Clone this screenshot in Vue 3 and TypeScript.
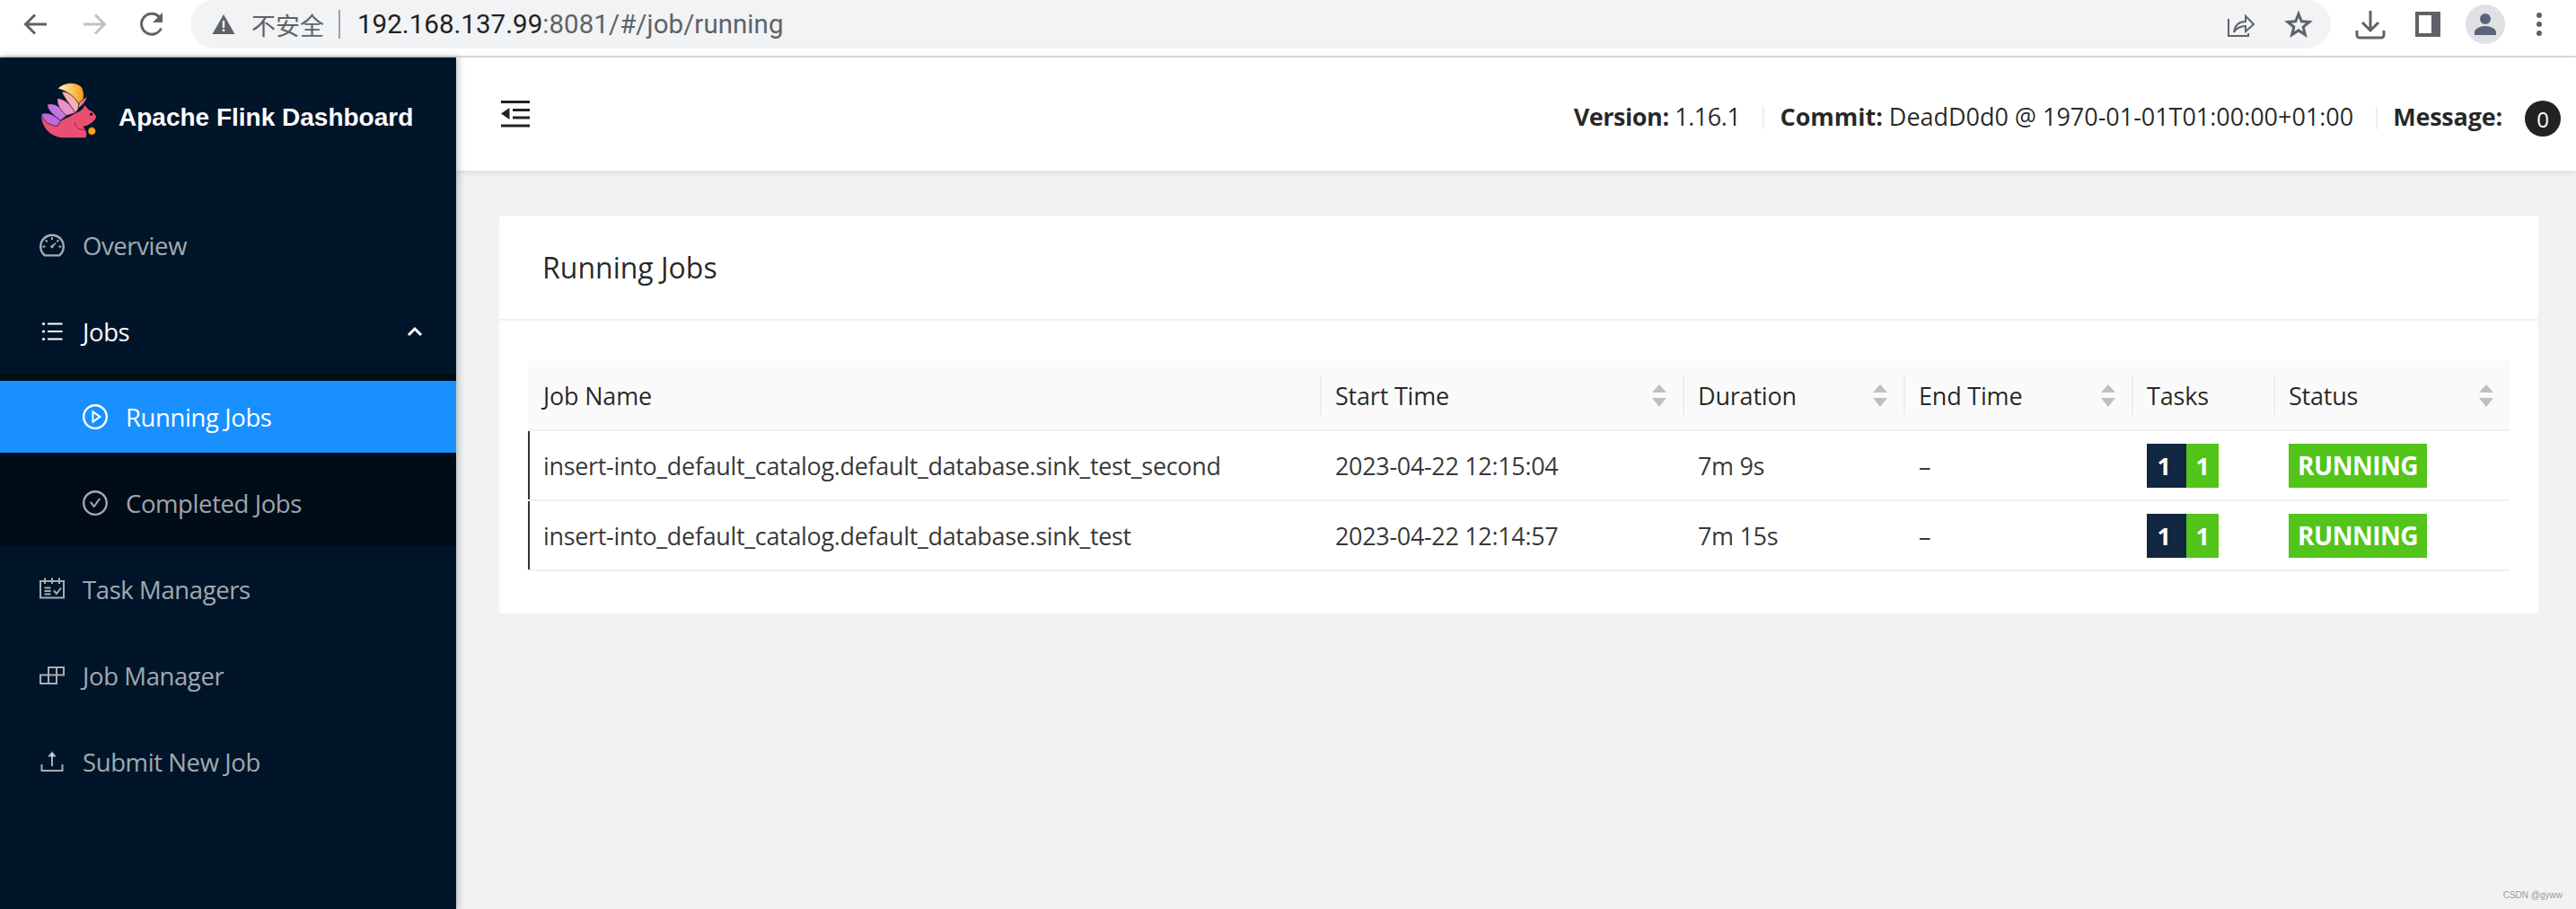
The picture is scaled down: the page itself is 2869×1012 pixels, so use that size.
<script setup lang="ts">
interface Job { name: string; start: string; duration: string }
const jobs: Job[] = [
  { name: 'insert-into_default_catalog.default_database.sink_test_second', start: '2023-04-22 12:15:04', duration: '7m 9s' },
  { name: 'insert-into_default_catalog.default_database.sink_test', start: '2023-04-22 12:14:57', duration: '7m 15s' },
]
const columns = [
  { label: 'Job Name', sort: false },
  { label: 'Start Time', sort: true },
  { label: 'Duration', sort: true },
  { label: 'End Time', sort: true },
  { label: 'Tasks', sort: false },
  { label: 'Status', sort: true },
]
</script>

<template>
  <div class="screen">
    <div class="browser">
      <div class="nav">
        <svg width="32" height="32" viewBox="0 0 32 32" class="gi"><path d="M28 16H5M15 5.500 4.500 16 15 26.500" /></svg>
        <svg width="32" height="32" viewBox="0 0 32 32" class="gi off"><path d="M4 16h23M17 5.500 27.500 16 17 26.500" /></svg>
        <svg width="32" height="32" viewBox="0 0 32 32" class="gi"><path d="M25.500 20.500A11.500 11.500 0 1 1 24 8.500" /><path class="solid" d="M27 3v11H16z" /></svg>
      </div>
      <div class="omnibox">
        <svg width="26" height="24" viewBox="0 0 26 24"><path fill="#5f6368" d="M13 1 25.500 23H.5z" /><path fill="#f1f3f4" d="M11.800 8h2.400v8h-2.400zM11.800 17.500h2.400V20h-2.400z" /></svg>
        <span class="insecure">不安全</span>
        <span class="omni-sep"></span>
        <span class="url"><b>192.168.137.99</b>:8081/#/job/running</span>
        <span class="grow"></span>
        <svg class="gi thin" width="32" height="32" viewBox="0 0 32 32"><path d="M2 10v19h22v-3M8 25c1-7 5-12 13-12V7l9 9-9 8v-6c-6 0-10 2-13 7z" /></svg>
        <svg class="gi star" width="32" height="32" viewBox="0 0 32 32"><path d="M16 4.500 19.300 12.800 28 13.400 21.200 19 23.400 27.600 16 22.900 8.600 27.600 10.800 19 4 13.400 12.700 12.800z" /></svg>
      </div>
      <div class="tools">
        <svg class="gi dl" width="34" height="34" viewBox="0 0 34 34"><path d="M17 2v21M8 15l9 9 9-9M2 24v5a3 3 0 0 0 3 3h24a3 3 0 0 0 3-3v-5" /></svg>
        <span class="panel"></span>
        <span class="avatar">
          <svg width="26" height="26" viewBox="0 0 26 26"><circle cx="13" cy="7" r="6" fill="#5a6478" /><path fill="#5a6478" d="M1 25v-3c0-4 6-7 12-7s12 3 12 7v3z" /></svg>
        </span>
        <span class="dots"><i></i><i></i><i></i></span>
      </div>
    </div>

    <div class="app">
      <aside class="sidebar">
        <div class="brand">
          <svg class="logo" width="62" height="62" viewBox="75 70 185 185">
            <defs>
              <linearGradient id="tailTop" x1="0" y1="0" x2="1" y2="0">
                <stop offset="0" stop-color="#fdf3cf" />
                <stop offset=".55" stop-color="#f9c75a" />
                <stop offset="1" stop-color="#f59a12" />
              </linearGradient>
              <linearGradient id="feather" x1="0" y1="1" x2="1" y2="0">
                <stop offset="0" stop-color="#a95fe0" />
                <stop offset="1" stop-color="#dd8ad8" />
              </linearGradient>
            </defs>
            <path fill="#ea4f72" d="M78 180C80 222 112 252 150 253L226 253C232 240 226 226 216 216C240 212 258 196 260 183C256 170 245 165 236 160L222 145C218 155 210 165 195 170C170 185 145 195 130 205Z" />
            <g stroke="#1c0a22" stroke-width="2" stroke-linejoin="round">
              <path fill="#c069dc" d="M132 214C106 214 84 198 78 174C96 166 120 176 142 196Z" />
              <path fill="url(#feather)" d="M142 196C120 180 98 162 98 142C120 136 146 150 162 180Z" />
              <path fill="#e792c8" d="M162 180C142 162 128 142 132 122C156 124 178 144 192 170Z" />
              <path fill="#f6b0ae" d="M192 170C174 144 152 118 146 100C172 98 196 122 206 150Z" />
              <path fill="url(#tailTop)" d="M206 150C196 122 168 98 133 90C150 68 195 65 212 85C224 105 220 130 206 150Z" />
              <path fill="#ee7f9b" d="M204 136 231 115C226 132 216 146 200 156Z" />
            </g>
            <path fill="none" stroke="#7a1c3c" stroke-width="2.500" d="M190 202C188 218 204 228 222 226" />
            <circle cx="244" cy="175" r="5" fill="#1a0a1a" />
            <circle cx="246" cy="231" r="13" fill="#f7a416" stroke="#3a1a10" stroke-width="2" />
          </svg>
          <span class="brand-name">Apache Flink Dashboard</span>
        </div>
        <nav class="menu">
          <a class="item">
            <svg class="ic" viewBox="64 64 896 896"><path d="M924.800 385.600a446.700 446.700 0 0 0-96-142.400 446.700 446.700 0 0 0-142.400-96C631.100 123.800 572.500 112 512 112s-119.100 11.800-174.400 35.200a446.700 446.700 0 0 0-142.400 96 446.700 446.700 0 0 0-96 142.400C75.800 440.900 64 499.500 64 560c0 132.700 58.300 257.700 159.900 343.100l1.700 1.400c5.800 4.800 13.100 7.500 20.600 7.500h531.700c7.500 0 14.800-2.700 20.600-7.500l1.700-1.400C901.700 817.700 960 692.700 960 560c0-60.500-11.900-119.100-35.200-174.400zM761.400 836H262.600A371.120 371.120 0 0 1 140 560c0-99.400 38.700-192.800 109-263 70.300-70.300 163.700-109 263-109 99.400 0 192.800 38.700 263 109 70.300 70.300 109 163.700 109 263 0 105.600-44.500 205.500-122.600 276z" /><path d="M623.500 421.500a8.030 8.030 0 0 0-11.300 0L527.700 506c-18.700-5-39.400-.2-54.100 14.500a55.950 55.950 0 0 0 0 79.200 55.950 55.950 0 0 0 79.200 0 55.870 55.870 0 0 0 14.500-54.100l84.500-84.500c3.100-3.100 3.100-8.200 0-11.300l-28.300-28.300zM490 320h44c4.400 0 8-3.600 8-8v-80c0-4.400-3.600-8-8-8h-44c-4.400 0-8 3.600-8 8v80c0 4.400 3.600 8 8 8zm260 218v44c0 4.400 3.600 8 8 8h80c4.400 0 8-3.600 8-8v-44c0-4.400-3.600-8-8-8h-80c-4.400 0-8 3.600-8 8zm12.700-197.200l-31.100-31.100a8.030 8.030 0 0 0-11.300 0l-56.600 56.600a8.030 8.030 0 0 0 0 11.300l31.100 31.100c3.100 3.100 8.200 3.100 11.300 0l56.600-56.600c3.100-3.100 3.100-8.200 0-11.300zm-458.600-31.100a8.030 8.030 0 0 0-11.300 0l-31.100 31.100a8.030 8.030 0 0 0 0 11.300l56.600 56.600c3.100 3.100 8.200 3.100 11.300 0l31.100-31.100c3.100-3.100 3.100-8.200 0-11.300l-56.600-56.600zM262 530h-80c-4.400 0-8 3.600-8 8v44c0 4.400 3.600 8 8 8h80c4.400 0 8-3.600 8-8v-44c0-4.400-3.600-8-8-8z" /></svg>
            <span>Overview</span>
          </a>
          <a class="item open">
            <svg class="ic" viewBox="0 0 28 28"><circle cx="4.500" cy="5.500" r="1.600" /><circle cx="4.500" cy="14" r="1.600" /><circle cx="4.500" cy="22.500" r="1.600" /><path d="M9 4.500h16.500v2H9zM9 13h16.500v2H9zM9 21.500h16.500v2H9z" /></svg>
            <span>Jobs</span>
            <span class="grow"></span>
            <svg class="chev" width="18" height="12" viewBox="0 0 18 12"><path d="M2 10 9 3l7 7" /></svg>
          </a>
          <div class="submenu">
            <a class="item sub active">
              <svg class="ic" viewBox="64 64 896 896"><path d="M512 64C264.600 64 64 264.600 64 512s200.600 448 448 448 448-200.600 448-448S759.400 64 512 64zm0 820c-205.400 0-372-166.600-372-372s166.600-372 372-372 372 166.600 372 372-166.600 372-372 372z" /><path d="M719.400 499.100l-296.100-215A15.900 15.900 0 0 0 398 297v430c0 13.100 14.800 20.500 25.300 12.900l296.100-215a15.900 15.900 0 0 0 0-25.800zm-257.600 134V390.900L628.500 512 461.800 633.100z" /></svg>
              <span>Running Jobs</span>
            </a>
            <a class="item sub">
              <svg class="ic" viewBox="64 64 896 896"><path d="M699 353h-46.900c-10.200 0-19.900 4.900-25.900 13.300L469 584.300l-71.200-98.800c-6-8.300-15.600-13.300-25.900-13.300H325c-6.500 0-10.300 7.400-6.500 12.700l124.600 172.800a31.800 31.800 0 0 0 51.700 0l210.600-292c3.900-5.300.1-12.700-6.400-12.700z" /><path d="M512 64C264.600 64 64 264.600 64 512s200.600 448 448 448 448-200.600 448-448S759.400 64 512 64zm0 820c-205.400 0-372-166.600-372-372s166.600-372 372-372 372 166.600 372 372-166.600 372-372 372z" /></svg>
              <span>Completed Jobs</span>
            </a>
          </div>
          <a class="item after">
            <svg class="ic line" viewBox="0 0 28 28"><path d="M1 5h26v18.500H1zM6 1.500V8M14 1.500V8M22 1.500V8M5.500 12.500h7M5.500 16h7M5.500 19.500h7M16 15.500l3 3.500 5-6.500" /></svg>
            <span>Task Managers</span>
          </a>
          <a class="item">
            <svg class="ic line" viewBox="0 0 28 28"><path d="M1 13.500h18v9.500H1zM10 13.500V23M10 13.500V5h17v8.500H19zM19 5v8.500" /></svg>
            <span>Job Manager</span>
          </a>
          <a class="item">
            <svg class="ic line" viewBox="0 0 28 28"><path d="M2.500 17v7h23v-7M14 5v14" /><path class="solid" d="M14 2.500 19 8.500H9z" /></svg>
            <span>Submit New Job</span>
          </a>
        </nav>
      </aside>

      <div class="main">
        <header class="topbar">
          <svg class="fold" width="32" height="30" viewBox="0 0 32 30"><path d="M0 0h32v3H0zM0 26.500h32v3H0zM13 9h19v3H13zM13 17.500h19v3H13z" /><path d="M9.500 8v13L0 14.500z" /></svg>
          <span class="grow"></span>
          <div class="meta version"><b>Version:</b> 1.16.1</div>
          <i class="meta-sep"></i>
          <div class="meta commit"><b>Commit:</b> DeadD0d0 @ 1970-01-01T01:00:00+01:00</div>
          <i class="meta-sep"></i>
          <div class="meta msg"><b>Message:</b></div>
          <span class="count">0</span>
        </header>

        <section class="content">
          <div class="card">
            <div class="card-head">Running Jobs</div>
            <div class="card-body">
              <table>
                <colgroup>
                  <col style="width: 882px" /><col style="width: 404px" /><col style="width: 246px" />
                  <col style="width: 254px" /><col style="width: 158px" /><col style="width: 263px" />
                </colgroup>
                <thead>
                  <tr>
                    <th v-for="c in columns" :key="c.label">
                      <div class="th-in">
                        <span>{{ c.label }}</span>
                        <span v-if="c.sort" class="sort"><i class="up"></i><i class="down"></i></span>
                      </div>
                    </th>
                  </tr>
                </thead>
                <tbody>
                  <tr v-for="j in jobs" :key="j.name">
                    <td>{{ j.name }}</td>
                    <td>{{ j.start }}</td>
                    <td>{{ j.duration }}</td>
                    <td>–</td>
                    <td><span class="tasks"><b class="navy">1</b><b class="green">1</b></span></td>
                    <td><span class="status">RUNNING</span></td>
                  </tr>
                </tbody>
              </table>
            </div>
          </div>
        </section>
        <div class="watermark">CSDN @gyww</div>
      </div>
    </div>
  </div>
</template>

<style>
html, body { margin: 0; background: #f2f2f2; }
</style>

<style scoped>
.screen { width: 2869px; height: 1012px; overflow: hidden; display: flex; flex-direction: column; font-family: "Open Sans", "Noto Sans", sans-serif; }
.grow { flex: 1; }

.browser { height: 62px; flex: none; background: #fff; border-bottom: 2px solid #dcdee0; display: flex; align-items: flex-start; }
.nav { width: 212px; height: 54px; padding-left: 24px; box-sizing: border-box; display: flex; align-items: center; gap: 33px; flex: none; }
.gi { fill: none; stroke: #5f6368; stroke-width: 3; flex: none; }
.gi.off { stroke: #bdc1c6; }
.gi .solid { fill: #5f6368; stroke: none; }
.gi.thin { stroke-width: 2; margin-right: 32px; }
.gi.star { stroke-width: 3; margin-right: 20px; }
.omnibox { width: 2384px; height: 54px; flex: none; box-sizing: border-box; background: #f1f3f4; border-radius: 27px; padding-left: 24px; padding-right: 0; display: flex; align-items: center; }
.insecure { margin-left: 18px; font: 27px "Noto Sans CJK SC", sans-serif; color: #5f6368; }
.omni-sep { width: 2px; height: 32px; background: #9aa0a6; margin: 0 19px 0 16px; }
.url { font: 29.500px Roboto, sans-serif; letter-spacing: 0.04px; color: #5f6368; white-space: nowrap; }
.url b { font-weight: 400; color: #202124; }
.tools { flex: 1; height: 54px; display: flex; align-items: center; padding-left: 27px; position: relative; }
.panel { width: 28px; height: 28px; box-sizing: border-box; margin-left: 33px; border: 4px solid #5f6368; border-right-width: 10px; flex: none; }
.avatar { width: 44px; height: 44px; margin-left: 28px; border-radius: 50%; background: #dfe1e5; display: flex; align-items: center; justify-content: center; flex: none; }
.dots { margin-left: 35px; display: flex; flex-direction: column; gap: 4px; }
.dots i { width: 6px; height: 6px; border-radius: 50%; background: #5f6368; display: block; }

.app { flex: 1; display: flex; min-height: 0; }
.sidebar { width: 508px; flex: none; background: #001529; position: relative; z-index: 2; box-shadow: 2px 0 8px rgba(29, 35, 41, 0.3); }
.brand { height: 169px; box-sizing: border-box; padding: 28px 0 0 45px; display: flex; align-items: flex-start; }
.logo { flex: none; }
.brand-name { font: 700 28px/32px "Liberation Sans", Arial, sans-serif; color: #fff; margin: 23px 0 0 25px; white-space: nowrap; }
.menu { display: flex; flex-direction: column; }
.item { height: 80px; display: flex; align-items: center; padding: 0 37px 0 44px; font-size: 27.500px; letter-spacing: -0.4px; color: rgba(255, 255, 255, 0.65); margin-bottom: 16px; }
.item.open { color: #fff; margin-bottom: 7px; }
.item.after { margin-top: 8px; }
.item .ic { width: 28px; height: 28px; margin-right: 20px; fill: currentColor; flex: none; }
.item .ic.line { fill: none; stroke: currentColor; stroke-width: 2; }
.item .ic.line .solid { fill: currentColor; stroke: none; }
.chev { fill: none; stroke: #fff; stroke-width: 3; }
.submenu { background: #000c17; padding: 8px 0; }
.item.sub { padding-left: 92px; }
.item.sub:last-child { margin-bottom: 0; }
.item.active { background: #1890ff; color: #fff; }

.main { flex: 1; min-width: 0; display: flex; flex-direction: column; position: relative; }
.topbar { height: 126px; flex: none; background: #fff; box-shadow: 0 2px 8px rgba(0, 21, 41, 0.1); display: flex; align-items: center; padding: 0 17px 0 50px; position: relative; z-index: 1; }
.fold { fill: #222; }
.meta { font-size: 27px; color: rgba(0, 0, 0, 0.85); white-space: nowrap; margin-top: 4px; }
.meta b { font-weight: 700; }
.meta.version { letter-spacing: -0.45px; }
.meta.commit { letter-spacing: -0.03px; }
.meta.msg { letter-spacing: -0.2px; }
.meta-sep { width: 2px; height: 26px; background: #f0f0f0; margin: 7px 17px 0 25px; }
.count { width: 40px; height: 40px; margin-left: 25px; margin-top: 10px; border-radius: 50%; background: #222; color: #fff; font-size: 24px; display: flex; align-items: center; justify-content: center; }

.content { flex: 1; padding: 50px 42px 0 48px; }
.card { background: #fff; border-radius: 4px; }
.card-head { height: 115px; display: flex; align-items: center; padding-left: 48px; border-bottom: 2px solid #f0f0f0; font-size: 32px; font-weight: 500; color: rgba(0, 0, 0, 0.85); }
.card-body { padding: 45px 32px 47px; }
table { width: 2207px; table-layout: fixed; border-collapse: separate; border-spacing: 0; }
th { height: 76px; padding: 0; background: #fafafa; border-bottom: 2px solid #f0f0f0; text-align: left; font-size: 27px; letter-spacing: -0.2px; font-weight: 500; color: rgba(0, 0, 0, 0.85); position: relative; }
th + th::before { content: ""; position: absolute; left: 0; top: 16px; height: 44px; width: 2px; background: #eeeeee; }
.th-in { display: flex; align-items: center; justify-content: space-between; padding: 0 18px 0 17px; }
.sort { display: flex; flex-direction: column; gap: 6px; }
.sort i { display: block; width: 0; height: 0; border-left: 8px solid transparent; border-right: 8px solid transparent; }
.sort .up { border-bottom: 9px solid #bfbfbf; }
.sort .down { border-top: 10px solid #bfbfbf; }
td { height: 76px; padding: 0 0 0 17px; border-bottom: 2px solid #f0f0f0; font-size: 27px; letter-spacing: -0.33px; color: rgba(0, 0, 0, 0.8); white-space: nowrap; }
td:first-child { box-shadow: inset 2px 0 0 #333; }
.tasks { display: inline-flex; vertical-align: middle; }
.tasks b, .status { color: #fff; font-weight: 700; height: 49px; display: inline-flex; align-items: center; justify-content: center; }
.tasks b { font-size: 27px; }
.navy { width: 44px; padding-right: 6px; box-sizing: border-box; background: #112641; }
.green { width: 36px; background: #52c41a; }
.status { width: 154px; background: #52c41a; font-size: 28px; letter-spacing: -0.5px; vertical-align: middle; }
.watermark { position: absolute; right: 15px; bottom: 10px; font: 10px "Liberation Sans", sans-serif; color: #9a9a9a; }
</style>
